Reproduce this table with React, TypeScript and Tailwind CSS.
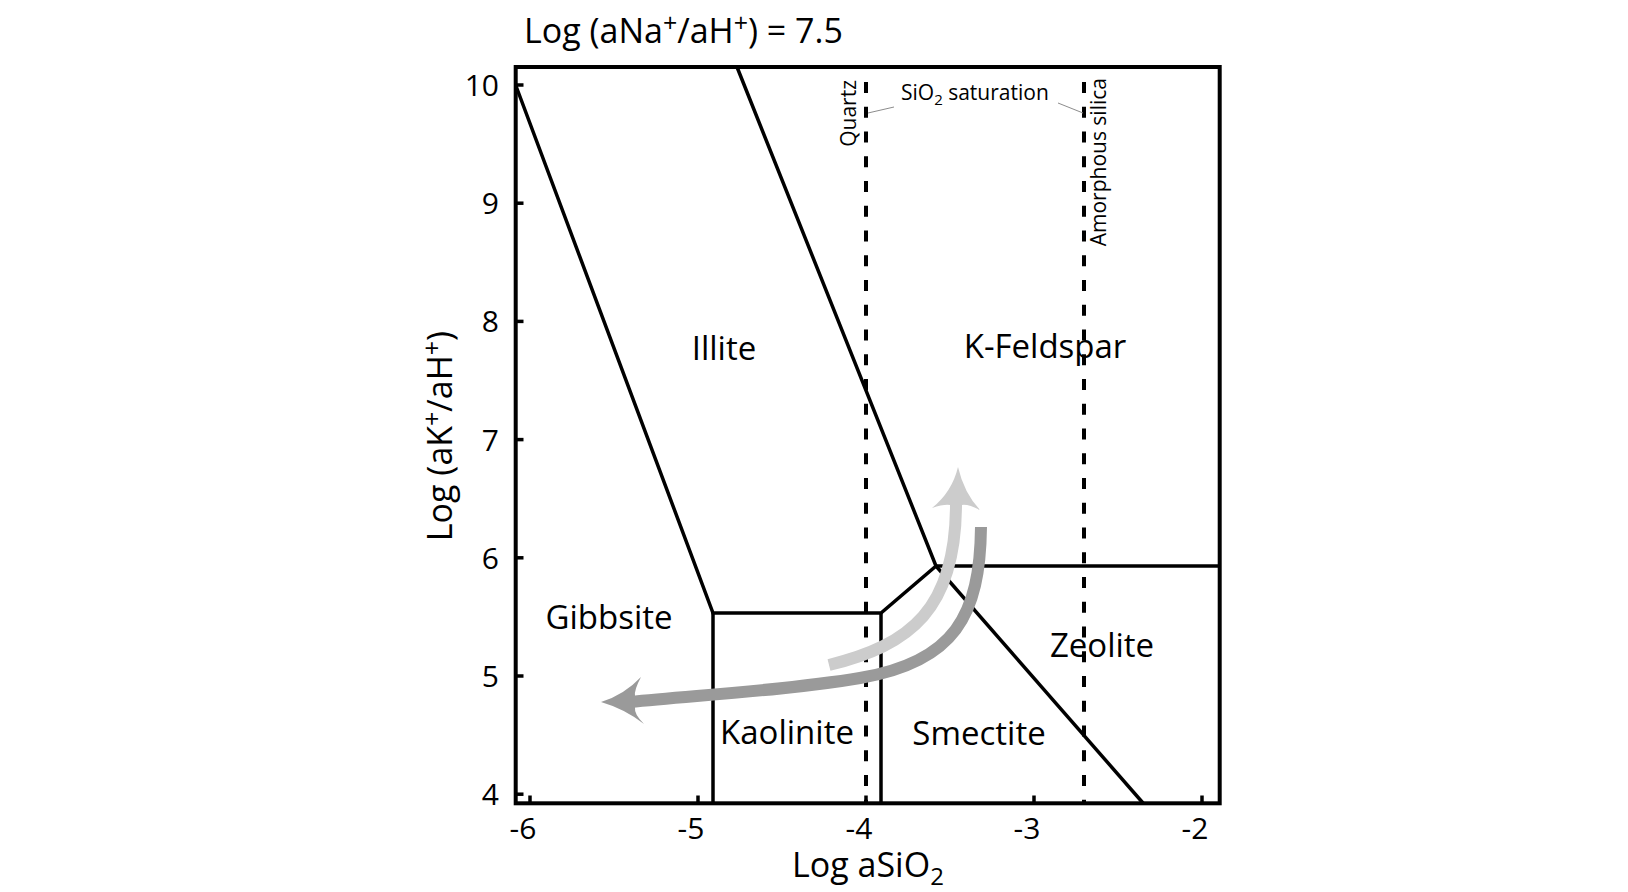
import React from "react";

const X = (v: number) => 866 + (v + 4) * 168;
const Y = (v: number) => 85 + (10 - v) * 118.2;

const yTicks = [10, 9, 8, 7, 6, 5, 4];
const xTicks = [-6, -5, -4, -3, -2];

const regions = [
  { t: "Illite", x: 724, y: 360 },
  { t: "K-Feldspar", x: 1045, y: 358 },
  { t: "Gibbsite", x: 609, y: 629 },
  { t: "Zeolite", x: 1102, y: 657 },
  { t: "Kaolinite", x: 787, y: 744 },
  { t: "Smectite", x: 979, y: 745 },
];

export default function App() {
  return (
    <div className="w-full h-[892px] bg-white flex items-start justify-center overflow-hidden">
      <svg
        width="1628"
        height="892"
        viewBox="0 0 1628 892"
        className="font-['Open_Sans',sans-serif] shrink-0"
        fill="#000"
      >
        {/* title */}
        <text x={524} y={43} fontSize={34}>
          Log (aNa
          <tspan fontSize={25} dy={-11}>+</tspan>
          <tspan dy={11}>/aH</tspan>
          <tspan fontSize={25} dy={-11}>+</tspan>
          <tspan dy={11}>) = 7.5</tspan>
        </text>

        {/* phase boundaries */}
        <g stroke="#000" strokeWidth={3.5} fill="none" strokeLinejoin="miter">
          <polyline points="516,86 713,613 881,613 936,566 737,67" />
          <line x1={713} y1={613} x2={713} y2={803} />
          <line x1={881} y1={613} x2={881} y2={803} />
          <line x1={936} y1={566} x2={1219} y2={566} />
          <line x1={936} y1={566} x2={1143} y2={803} />
        </g>

        {/* SiO2 saturation dashed lines */}
        <g stroke="#000" strokeWidth={4} strokeDasharray="11 13.75">
          <line x1={866} y1={82} x2={866} y2={803} />
          <line x1={1084} y1={82} x2={1084} y2={803} />
        </g>

        {/* leader lines */}
        <g stroke="#8c8c8c" strokeWidth={1}>
          <line x1={868} y1={113} x2={894} y2={107} />
          <line x1={1058} y1={103} x2={1083} y2={113} />
        </g>

        <text x={901} y={100} fontSize={21}>
          SiO
          <tspan fontSize={15} dy={5}>2</tspan>
          <tspan dy={-5}> saturation</tspan>
        </text>
        <text transform="translate(856 80) rotate(-90)" textAnchor="end" fontSize={21}>
          Quartz
        </text>
        <text transform="translate(1106 78) rotate(-90)" textAnchor="end" fontSize={21}>
          Amorphous silica
        </text>

        {/* frame */}
        <rect x={515.7} y={67} width={704} height={736.3} fill="none" stroke="#000" strokeWidth={4} />

        {/* ticks */}
        <g stroke="#000" strokeWidth={3.5}>
          {yTicks.map((v) => (
            <line key={"yt" + v} x1={516} y1={Y(v)} x2={523.5} y2={Y(v)} />
          ))}
          {xTicks.map((v) => (
            <line key={"xt" + v} x1={X(v)} y1={803} x2={X(v)} y2={795.5} />
          ))}
        </g>

        {/* tick labels */}
        {yTicks.map((v) => (
          <text key={"yl" + v} x={499} y={Y(v) + 11} fontSize={30} textAnchor="end">
            {v}
          </text>
        ))}
        {xTicks.map((v) => (
          <text key={"xl" + v} x={X(v) - 7} y={839} fontSize={30} textAnchor="middle">
            {"-" + Math.abs(v)}
          </text>
        ))}

        {/* axis titles */}
        <text x={868} y={877} fontSize={34} textAnchor="middle">
          Log aSiO
          <tspan fontSize={24} dy={8}>2</tspan>
        </text>
        <text transform="translate(452 436) rotate(-90)" fontSize={34} textAnchor="middle">
          Log (aK
          <tspan fontSize={25} dy={-11}>+</tspan>
          <tspan dy={11}>/aH</tspan>
          <tspan fontSize={25} dy={-11}>+</tspan>
          <tspan dy={11}>)</tspan>
        </text>

        {/* region labels */}
        {regions.map((r) => (
          <text key={r.t} x={r.x} y={r.y} fontSize={33} textAnchor="middle">
            {r.t}
          </text>
        ))}

        {/* light grey arrow */}
        <path
          d="M 829 665 C 910 645, 957 610, 956 500"
          fill="none"
          stroke="#cccccc"
          strokeWidth={12}
        />
        <path
          d="M 958 467 Q 964 493 980 510 Q 968 504 962 505 L 950 505 Q 944 504 932 508 Q 952 492 958 467 Z"
          fill="#cccccc"
        />

        {/* dark grey arrow */}
        <path
          d="M 981 527 C 980 615, 955 662, 860 678 C 790 690, 700 695, 630 702"
          fill="none"
          stroke="#9a9a9a"
          strokeWidth={12}
        />
        <path
          d="M 601 702 Q 624 695 641 677 Q 634 690 635 696 L 635 708 Q 634 714 644 724 Q 625 709 601 702 Z"
          fill="#9a9a9a"
        />
      </svg>
    </div>
  );
}
